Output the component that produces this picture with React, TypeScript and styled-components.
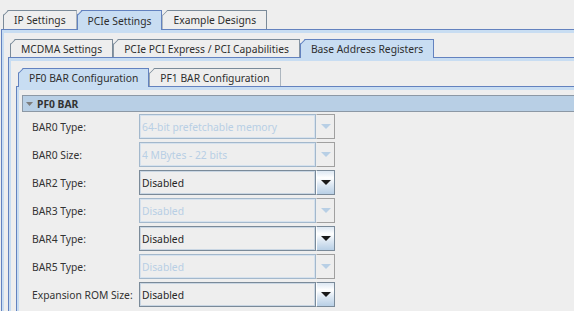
import React from 'react';
import styled, { createGlobalStyle } from 'styled-components';

const GlobalStyle = createGlobalStyle`
  html, body { margin: 0; padding: 0; background: #eeeeee; }
  body {
    font-family: "Noto Sans", "DejaVu Sans", sans-serif;
    font-size: 10.3px;
    color: #333333;
  }
  * { box-sizing: border-box; }
`;

const Page = styled.div`
  width: 574px;
  height: 311px;
  overflow: hidden;
  background: #eeeeee;
  padding: 10px 0 0 1px;
`;

const Pane = styled.div<{ $width: number }>`
  display: flex;
  flex-direction: column;
  width: ${(p) => p.$width}px;
  min-height: 420px;
`;

const TabRow = styled.div<{ $h: number }>`
  flex: 0 0 auto;
  display: flex;
  align-items: stretch;
  height: ${(p) => p.$h}px;
  padding-left: 2px;
  position: relative;
  z-index: 1;
`;

const Tab = styled.div<{ $selected?: boolean }>`
  position: relative;
  display: flex;
  align-items: center;
  padding: 0 10px;
  white-space: nowrap;
  color: #2e2e2e;
  border: 1px solid ${(p) => (p.$selected ? '#6382bf' : '#7a8a99')};
  border-bottom: none;
  background: ${(p) => (p.$selected ? '#c8ddf2' : '#eeeeee')};
  margin-bottom: ${(p) => (p.$selected ? '-1px' : '0')};
  clip-path: polygon(5px 0, 100% 0, 100% 100%, 0 100%, 0 5px);
  &::before {
    content: '';
    position: absolute;
    left: -1px;
    top: 4px;
    width: 7.2px;
    height: 1px;
    background: ${(p) => (p.$selected ? '#6382bf' : '#7a8a99')};
    transform-origin: 0 0;
    transform: rotate(-45deg);
  }
`;

const PaneBody = styled.div<{ $pt: number; $pl: number }>`
  flex: 1 0 auto;
  border-top: 1px solid #6382bf;
  border-left: 1px solid #6382bf;
  box-shadow: inset 2px 3px 0 #c8ddf2;
  padding: ${(p) => p.$pt}px 0 0 ${(p) => p.$pl}px;
`;

const Section = styled.div`
  display: flex;
  flex-direction: column;
`;

const SectionHeader = styled.div`
  height: 17px;
  display: flex;
  align-items: center;
  gap: 4px;
  padding-left: 3px;
  border: 1px solid #8c98a5;
  background: #b8cfe5;
  font-weight: bold;
  color: #333333;
`;

const Form = styled.div`
  display: grid;
  grid-template-columns: 107px 196px;
  grid-auto-rows: 25px;
  row-gap: 3px;
  align-items: center;
  margin-top: 2px;
  padding-left: 10px;
`;

const Label = styled.div`
  color: #333333;
  white-space: nowrap;
`;

const Combo = styled.div`
  display: flex;
  width: 196px;
  height: 25px;
`;

const ComboField = styled.div<{ $disabled?: boolean }>`
  flex: 1;
  display: flex;
  align-items: center;
  padding-left: 2px;
  white-space: nowrap;
  overflow: hidden;
  background: #eeeeee;
  border: 1px solid ${(p) => (p.$disabled ? '#a3b8cc' : '#7a8a99')};
  box-shadow: inset 0 0 0 1px ${(p) => (p.$disabled ? '#d6e2ee' : '#c9d6e3')};
  color: ${(p) => (p.$disabled ? '#b8cfe5' : '#262626')};
`;

const ComboButton = styled.div<{ $disabled?: boolean }>`
  width: 19px;
  display: flex;
  align-items: center;
  justify-content: center;
  border: 1px solid ${(p) => (p.$disabled ? '#a0a0a0' : '#7a8a99')};
  border-left: 1px solid ${(p) => (p.$disabled ? '#eeeeee' : '#ffffff')};
  background: ${(p) =>
    p.$disabled
      ? '#eeeeee'
      : 'linear-gradient(to bottom, #dde8f3 0%, #ffffff 30%, #dde8f3 60%, #b8cfe5 100%)'};
`;

const Arrow = ({ color }: { color: string }) => (
  <svg width="10" height="5" viewBox="0 0 10 5">
    <polygon points="0,0 10,0 5,5" fill={color} />
  </svg>
);

type Row = { label: string; value: string; disabled?: boolean };

const rows: Row[] = [
  { label: 'BAR0 Type:', value: '64-bit prefetchable memory', disabled: true },
  { label: 'BAR0 Size:', value: '4 MBytes - 22 bits', disabled: true },
  { label: 'BAR2 Type:', value: 'Disabled' },
  { label: 'BAR3 Type:', value: 'Disabled', disabled: true },
  { label: 'BAR4 Type:', value: 'Disabled' },
  { label: 'BAR5 Type:', value: 'Disabled', disabled: true },
  { label: 'Expansion ROM Size:', value: 'Disabled' },
];

export default function App() {
  return (
    <>
      <GlobalStyle />
      <Page>
        <Pane $width={700}>
          <TabRow $h={19}>
            <Tab>IP Settings</Tab>
            <Tab $selected>PCIe Settings</Tab>
            <Tab>Example Designs</Tab>
          </TabRow>
          <PaneBody $pt={9} $pl={6}>
            <Pane $width={680}>
              <TabRow $h={18}>
                <Tab>MCDMA Settings</Tab>
                <Tab>PCIe PCI Express / PCI Capabilities</Tab>
                <Tab $selected>Base Address Registers</Tab>
              </TabRow>
              <PaneBody $pt={10} $pl={7}>
                <Pane $width={660}>
                  <TabRow $h={18}>
                    <Tab $selected>PF0 BAR Configuration</Tab>
                    <Tab>PF1 BAR Configuration</Tab>
                  </TabRow>
                  <PaneBody $pt={8} $pl={5}>
                    <Section>
                      <SectionHeader>
                        <svg width="7" height="4" viewBox="0 0 7 4">
                          <polygon points="0,0 7,0 3.5,4" fill="#7d7d7d" />
                        </svg>
                        PF0 BAR
                      </SectionHeader>
                      <Form>
                        {rows.map((r) => (
                          <React.Fragment key={r.label}>
                            <Label>{r.label}</Label>
                            <Combo>
                              <ComboField $disabled={r.disabled}>{r.value}</ComboField>
                              <ComboButton $disabled={r.disabled}>
                                <Arrow color={r.disabled ? '#b8cfe5' : '#1a1a1a'} />
                              </ComboButton>
                            </Combo>
                          </React.Fragment>
                        ))}
                      </Form>
                    </Section>
                  </PaneBody>
                </Pane>
              </PaneBody>
            </Pane>
          </PaneBody>
        </Pane>
      </Page>
    </>
  );
}
